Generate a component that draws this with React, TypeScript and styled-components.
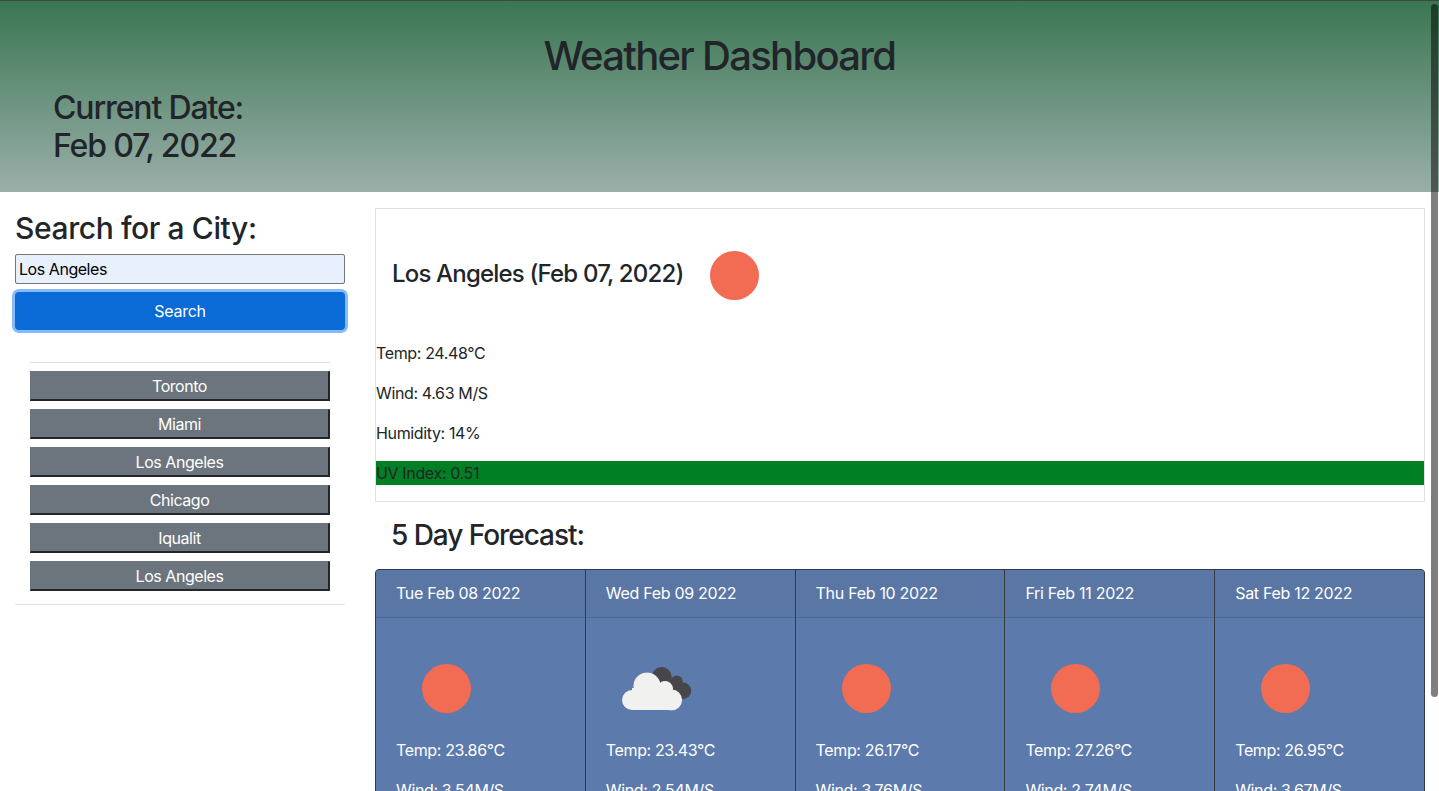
import React from 'react';
import styled, { createGlobalStyle } from 'styled-components';

const cities = ['Toronto', 'Miami', 'Los Angeles', 'Chicago', 'Iqualit', 'Los Angeles'];

const forecast = [
  { date: 'Tue Feb 08 2022', temp: '23.86', wind: '3.54', cloudy: false },
  { date: 'Wed Feb 09 2022', temp: '23.43', wind: '2.54', cloudy: true },
  { date: 'Thu Feb 10 2022', temp: '26.17', wind: '3.76', cloudy: false },
  { date: 'Fri Feb 11 2022', temp: '27.26', wind: '2.74', cloudy: false },
  { date: 'Sat Feb 12 2022', temp: '26.95', wind: '3.67', cloudy: false },
];

const SunIcon = () => (
  <WeatherIcon viewBox="0 0 100 100">
    <circle cx="50.5" cy="50.5" r="24.5" fill="#f16c52" />
  </WeatherIcon>
);

const CloudIcon = () => (
  <WeatherIcon viewBox="0 0 100 100">
    <g fill="#474749">
      <circle cx="55.7" cy="39" r="10" />
      <circle cx="70.7" cy="43.5" r="6" />
      <circle cx="77" cy="52.7" r="8.2" />
      <path d="M50 36 L72 42 L76 60 L55 60 Z" />
    </g>
    <g fill="#f1f1ef" stroke="#d8dde4" strokeWidth="1.2" paintOrder="stroke">
      <circle cx="41" cy="48" r="13" />
      <circle cx="59" cy="51" r="7.5" />
      <circle cx="65.5" cy="62" r="10" />
    </g>
    <g fill="#f1f1ef">
      <circle cx="41" cy="48" r="13" />
      <circle cx="59" cy="51" r="7.5" />
      <circle cx="26" cy="62" r="10" />
      <circle cx="65.5" cy="62" r="10" />
      <rect x="26" y="50" width="39.5" height="22" />
    </g>
  </WeatherIcon>
);

const App = () => (
  <Page>
    <GlobalStyle />
    <Header>
      <Title>Weather Dashboard</Title>
      <CurrentDate>
        Current Date:
        <br />
        Feb 07, 2022
      </CurrentDate>
    </Header>
    <Content>
      <Sidebar>
        <SearchTitle>Search for a City:</SearchTitle>
        <CityInput defaultValue="Los Angeles" />
        <SearchButton>Search</SearchButton>
        <CityList>
          <ListRule />
          {cities.map((city, i) => (
            <CityButton key={i}>{city}</CityButton>
          ))}
        </CityList>
        <BottomRule />
      </Sidebar>
      <Main>
        <CurrentCard>
          <CurrentHeader>
            <CityTitle>Los Angeles (Feb 07, 2022)</CityTitle>
            <SunIcon />
          </CurrentHeader>
          <Stat>Temp: 24.48°C</Stat>
          <Stat>Wind: 4.63 M/S</Stat>
          <Stat>Humidity: 14%</Stat>
          <UvIndex>UV Index: 0.51</UvIndex>
        </CurrentCard>
        <ForecastTitle>5 Day Forecast:</ForecastTitle>
        <CardGroup>
          {forecast.map((day) => (
            <DayCard key={day.date}>
              <DayHeader>{day.date}</DayHeader>
              <DayBody>
                {day.cloudy ? <CloudIcon /> : <SunIcon />}
                <DayStat>Temp: {day.temp}°C</DayStat>
                <DayStat>Wind: {day.wind}M/S</DayStat>
              </DayBody>
            </DayCard>
          ))}
        </CardGroup>
      </Main>
    </Content>
    <ScrollThumb />
  </Page>
);

export default App;

const GlobalStyle = createGlobalStyle`
  * {
    box-sizing: border-box;
  }

  html,
  body {
    margin: 0;
    overflow: hidden;
    background: #fff;
  }

  body {
    font-family: Inter, "Liberation Sans", sans-serif;
    font-size: 16px;
    line-height: 24px;
    letter-spacing: -0.36px;
    color: #212529;
  }
`;

const Page = styled.div`
  position: relative;
  width: 1439px;
  height: 791px;
  overflow: hidden;
`;

const ScrollThumb = styled.div`
  position: absolute;
  top: 4px;
  right: 1px;
  width: 7px;
  height: 693px;
  border-radius: 4px;
  background: rgba(0, 0, 0, 0.5);
`;

const Header = styled.header`
  height: 192px;
  padding: 32px 0 0 53px;
  border-top: 1px solid #444;
  background: linear-gradient(#3a7652, #9bafaa);
`;

const Title = styled.h1`
  margin: -1px 0 9px -53px;
  font-size: 40px;
  font-weight: 500;
  line-height: 48px;
  letter-spacing: -1.7px;
  text-align: center;
`;

const CurrentDate = styled.h2`
  margin: 0;
  font-size: 32px;
  font-weight: 500;
  line-height: 38px;
  letter-spacing: -1.15px;
`;

const Content = styled.div`
  display: flex;
  align-items: flex-start;
`;

const Sidebar = styled.aside`
  flex: none;
  width: 345px;
  margin-left: 15px;
  padding-top: 19px;
`;

const SearchTitle = styled.h3`
  margin: 0 0 9px;
  font-size: 30px;
  font-weight: 500;
  line-height: 34px;
  letter-spacing: -0.4px;
`;

const CityInput = styled.input`
  display: block;
  width: 330px;
  height: 30px;
  padding: 0 3px;
  border: 1px solid #767676;
  border-radius: 2px;
  outline: none;
  background: #e8f0fe;
  color: #000;
  font: 400 16px Inter, "Liberation Sans", sans-serif;
  letter-spacing: -0.45px;
`;

const SearchButton = styled.button`
  display: block;
  width: 330px;
  height: 38px;
  margin-top: 8px;
  border: none;
  border-radius: 4px;
  background: #0a6ad6;
  box-shadow: 0 0 0 3px #85bbfa;
  color: #fff;
  font: 400 16px Inter, "Liberation Sans", sans-serif;
  letter-spacing: -0.3px;
`;

const CityList = styled.div`
  display: flex;
  flex-direction: column;
  gap: 8px;
  width: 330px;
  margin-top: 32px;
  padding: 0 15px;
`;

const ListRule = styled.div`
  height: 1px;
  background: #e3e3e3;
`;

const CityButton = styled.button`
  height: 30px;
  padding: 0;
  border-style: solid;
  border-width: 1px 2px 2px 1px;
  border-color: #6c757d #212529 #212529 #6c757d;
  background: #6c757d;
  color: #fff;
  font: 400 16px Inter, "Liberation Sans", sans-serif;
  letter-spacing: -0.45px;
`;

const BottomRule = styled.div`
  width: 330px;
  height: 1px;
  margin-top: 13px;
  background: #e3e3e3;
`;

const Main = styled.main`
  flex: none;
  width: 1050px;
  margin-left: 15px;
  padding-top: 16px;
`;

const CurrentCard = styled.section`
  height: 294px;
  border: 1px solid #dfe1e5;
`;

const CurrentHeader = styled.div`
  display: flex;
  align-items: center;
  padding: 16px 16px 0;
  margin-bottom: 16px;
`;

const CityTitle = styled.h4`
  margin: 0 1px 4px 0;
  font-size: 24px;
  font-weight: 500;
  line-height: 29px;
  letter-spacing: -0.82px;
`;

const WeatherIcon = styled.svg`
  display: block;
  flex: none;
  width: 100px;
  height: 100px;
`;

const Stat = styled.p`
  margin: 0 0 16px;
`;

const UvIndex = styled(Stat)`
  margin: 0;
  background: #007f24;
`;

const ForecastTitle = styled.h3`
  margin: 17px 0 17px 16px;
  font-size: 28px;
  font-weight: 500;
  line-height: 33px;
  letter-spacing: -1.05px;
`;

const CardGroup = styled.div`
  display: flex;
  border: 1px solid #343a40;
  border-radius: 4px;
  overflow: hidden;
  background: #5c7aab;
  color: #fff;
`;

const DayCard = styled.article`
  flex: 1 1 0;
  min-width: 0;

  & + & {
    border-left: 1px solid #343a40;
  }
`;

const DayHeader = styled.div`
  height: 48px;
  padding: 11px 20px 0;
  border-bottom: 1px solid #4d6791;
  background: #5a76a5;
  letter-spacing: -0.3px;
`;

const DayBody = styled.div`
  padding: 20px;
`;

const DayStat = styled.p`
  margin: 0 0 16px;
`;
